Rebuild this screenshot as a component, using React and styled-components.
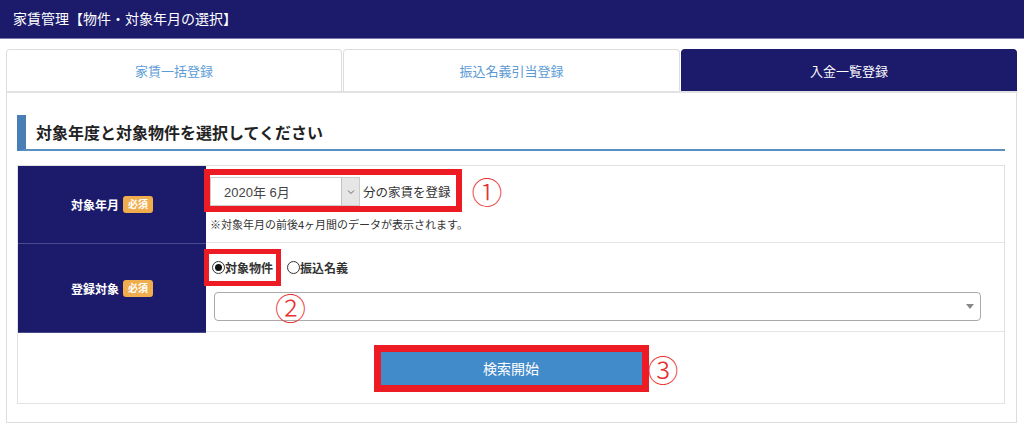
import React from 'react';
import styled, { createGlobalStyle } from 'styled-components';

const GlobalStyle = createGlobalStyle`
    body {
        margin: 0;
        background: #ffffff;
        font-family: "Liberation Sans", "Noto Sans CJK JP", sans-serif;
        color: #333333;
    }
`;

const TitleBar = styled.div`
    height: 39px;
    background-color: #1b1a6b;
    color: #ffffff;
    font-size: 14px;
    line-height: 39px;
    padding-left: 13px;
    border-bottom: 1px solid #7a7ab0;
    box-sizing: border-box;
`;

const Main = styled.div`
    padding: 10px 7px 0 6px;
`;

const Tabs = styled.div`
    display: grid;
    grid-template-columns: 336px 337px 1fr;
    gap: 1px;
`;

const Tab = styled.div`
    height: 42px;
    display: flex;
    align-items: center;
    justify-content: center;
    font-size: 13px;
    box-sizing: border-box;
    border: 1px solid ${props => (props.active ? '#1b1a6b' : '#dddddd')};
    border-bottom: none;
    border-radius: 4px 4px 0 0;
    background-color: ${props => (props.active ? '#1b1a6b' : '#ffffff')};
    color: ${props => (props.active ? '#ffffff' : '#5b9bd5')};
`;

const Panel = styled.div`
    border: 1px solid #dddddd;
    border-top: 2px solid #e2e2e2;
    padding: 22px 11px 18px 10px;
`;

const Heading = styled.h2`
    margin: 0;
    height: 36px;
    box-sizing: border-box;
    border-left: 9px solid #4a7fb5;
    border-bottom: 2px solid #5a8fc4;
    padding-left: 10px;
    font-size: 16px;
    font-weight: bold;
    color: #222222;
    display: flex;
    align-items: center;
`;

const Table = styled.div`
    margin-top: 14px;
    border: 1px solid #e2e2e2;
    display: grid;
    grid-template-columns: 188px 1fr;
`;

const LabelCell = styled.div`
    background-color: #1b1a6b;
    height: ${props => props.h}px;
    display: flex;
    align-items: center;
    justify-content: center;
    gap: 4px;
    border-bottom: 1px solid #4a4a8c;
    color: #ffffff;
    font-size: 12px;
    font-weight: bold;
`;

const Badge = styled.span`
    background-color: #f0ad4e;
    color: #ffffff;
    font-size: 10px;
    font-weight: bold;
    padding: 1px 5px;
    border-radius: 3px;
    line-height: 15px;
`;

const ValueCell = styled.div`
    height: ${props => props.h}px;
    border-bottom: 1px solid #e5e5e5;
    padding: ${props => props.pad};
    box-sizing: border-box;
`;

const FullCell = styled.div`
    grid-column: 1 / 3;
    height: 70px;
    display: flex;
    align-items: center;
    justify-content: center;
`;

const Marked = styled.div`
    display: inline-flex;
    align-items: center;
    border: ${props => props.w || 6}px solid #ed1c24;
    background: #ffffff;
    padding: ${props => props.pad || '0'};
    margin-left: ${props => props.shift || 0}px;
    position: relative;
`;

const Circled = styled.span`
    color: #e8312f;
    font-family: "Noto Sans CJK JP", sans-serif;
    font-size: 31px;
    font-weight: 300;
    line-height: 1;
`;

const SideMark = styled(Circled)`
    position: absolute;
    left: calc(100% + 6px);
    top: 50%;
    transform: translateY(-50%);
`;

const LineRow = styled.div`
    display: flex;
    align-items: center;
    gap: 10px;
`;

const YearSelect = styled.div`
    width: 150px;
    height: 29px;
    box-sizing: border-box;
    border: 1px solid #cccccc;
    display: flex;
    align-items: stretch;
    font-size: 13px;
    color: #444444;
`;

const SelectText = styled.div`
    flex: 1;
    display: flex;
    align-items: center;
    padding-left: 13px;
`;

const ArrowBox = styled.div`
    width: 17px;
    background: #e6e6e6;
    border-left: 1px solid #c2c2c2;
    display: flex;
    align-items: center;
    justify-content: center;
`;

const Suffix = styled.span`
    font-size: 12.5px;
    color: #333333;
    margin-left: 3px;
`;

const Note = styled.div`
    font-size: 11px;
    color: #333333;
    margin-top: 4px;
    padding-left: 4px;
`;

const RadioRow = styled.div`
    display: flex;
    align-items: center;
    gap: 6px;
`;

const RadioLabel = styled.label`
    display: inline-flex;
    align-items: center;
    font-size: 12px;
    font-weight: bold;
    color: #333333;
`;

const RadioDot = styled.span`
    width: 13px;
    height: 13px;
    box-sizing: border-box;
    border-radius: 50%;
    border: 1px solid #333333;
    background: #ffffff;
    display: inline-flex;
    align-items: center;
    justify-content: center;
    &::after {
        content: '';
        width: 7px;
        height: 7px;
        border-radius: 50%;
        background: ${props => (props.checked ? '#111111' : 'transparent')};
    }
`;

const WideSelect = styled.div`
    margin: 6px 0 0 8px;
    width: 767px;
    height: 29px;
    box-sizing: border-box;
    border: 1px solid #aaaaaa;
    border-radius: 4px;
    display: flex;
    align-items: center;
    justify-content: space-between;
    padding: 0 6px 0 60px;
`;

const Caret = styled.span`
    width: 0;
    height: 0;
    border-left: 4px solid transparent;
    border-right: 4px solid transparent;
    border-top: 5px solid #888888;
`;

const SearchButton = styled.button`
    width: 261px;
    height: 33px;
    border: none;
    background-color: #428bca;
    color: #ffffff;
    font-family: inherit;
    font-size: 14px;
    display: block;
`;

const App = () => {
    return (
        <>
            <GlobalStyle />
            <TitleBar>家賃管理【物件・対象年月の選択】</TitleBar>
            <Main>
                <Tabs>
                    <Tab>家賃一括登録</Tab>
                    <Tab>振込名義引当登録</Tab>
                    <Tab active>入金一覧登録</Tab>
                </Tabs>
                <Panel>
                    <Heading>対象年度と対象物件を選択してください</Heading>
                    <Table>
                        <LabelCell h={77}>
                            対象年月 <Badge>必須</Badge>
                        </LabelCell>
                        <ValueCell h={77} pad="3px 0 0 0">
                            <LineRow>
                                <Marked shift={-2} pad="2px 5px 0 0">
                                    <YearSelect>
                                        <SelectText>2020年 6月</SelectText>
                                        <ArrowBox>
                                            <svg width="8" height="6" viewBox="0 0 8 6">
                                                <path d="M1 1.5 L4 4.5 L7 1.5" fill="none" stroke="#666" strokeWidth="1" />
                                            </svg>
                                        </ArrowBox>
                                    </YearSelect>
                                    <Suffix>分の家賃を登録</Suffix>
                                </Marked>
                                <Circled>①</Circled>
                            </LineRow>
                            <Note>※対象年月の前後4ヶ月間のデータが表示されます。</Note>
                        </ValueCell>
                        <LabelCell h={88}>
                            登録対象 <Badge>必須</Badge>
                        </LabelCell>
                        <ValueCell h={88} pad="5px 0 0 0">
                            <RadioRow>
                                <Marked w={5} shift={-2} pad="5px 3px 5px 3px">
                                    <RadioLabel>
                                        <RadioDot checked />対象物件
                                    </RadioLabel>
                                </Marked>
                                <RadioLabel>
                                    <RadioDot />振込名義
                                </RadioLabel>
                            </RadioRow>
                            <WideSelect>
                                <Circled>②</Circled>
                                <Caret />
                            </WideSelect>
                        </ValueCell>
                        <FullCell>
                            <Marked w={7}>
                                <SearchButton>検索開始</SearchButton>
                                <SideMark>③</SideMark>
                            </Marked>
                        </FullCell>
                    </Table>
                </Panel>
            </Main>
        </>
    );
};

export default App;
